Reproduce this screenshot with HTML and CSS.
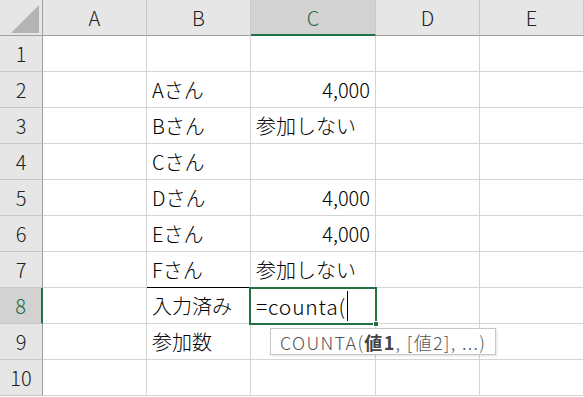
FILE: index.html
```html
<!DOCTYPE html>
<html lang="ja">
  <head>
    <meta charset="UTF-8" />
    <meta name="viewport" content="width=device-width, initial-scale=1.0" />
    <title>COUNTA</title>
    <link rel="stylesheet" href="styles.css">
  </head>
  <body>
    <div class="sheet">
      <div class="corner">
        <svg width="42" height="35" viewBox="0 0 42 35"><polygon points="11,33 39,33 39,5" fill="#b4b4b4" /></svg>
      </div>
      <div class="col-hd">A</div>
      <div class="col-hd">B</div>
      <div class="col-hd sel">C</div>
      <div class="col-hd">D</div>
      <div class="col-hd">E</div>

      <div class="row-hd">1</div>
      <div class="cell"></div><div class="cell"></div><div class="cell"></div><div class="cell"></div><div class="cell"></div>

      <div class="row-hd">2</div>
      <div class="cell"></div><div class="cell">Aさん</div><div class="cell num">4,000</div><div class="cell"></div><div class="cell"></div>

      <div class="row-hd">3</div>
      <div class="cell"></div><div class="cell">Bさん</div><div class="cell">参加しない</div><div class="cell"></div><div class="cell"></div>

      <div class="row-hd">4</div>
      <div class="cell"></div><div class="cell">Cさん</div><div class="cell"></div><div class="cell"></div><div class="cell"></div>

      <div class="row-hd">5</div>
      <div class="cell"></div><div class="cell">Dさん</div><div class="cell num">4,000</div><div class="cell"></div><div class="cell"></div>

      <div class="row-hd">6</div>
      <div class="cell"></div><div class="cell">Eさん</div><div class="cell num">4,000</div><div class="cell"></div><div class="cell"></div>

      <div class="row-hd">7</div>
      <div class="cell"></div><div class="cell ruled">Fさん</div><div class="cell">参加しない</div><div class="cell"></div><div class="cell"></div>

      <div class="row-hd sel">8</div>
      <div class="cell"></div><div class="cell">入力済み</div>
      <div class="cell editing">
        <span class="formula">=counta(</span><span class="caret"></span>
        <div class="active"><span class="handle"></span></div>
      </div>
      <div class="cell"></div><div class="cell"></div>

      <div class="row-hd">9</div>
      <div class="cell"></div><div class="cell">参加数</div><div class="cell"></div><div class="cell"></div><div class="cell"></div>

      <div class="row-hd">10</div>
      <div class="cell"></div><div class="cell"></div><div class="cell"></div><div class="cell"></div><div class="cell"></div>

      <div class="tip">COUNTA(<b>値1</b>, [値2], ...)</div>
    </div>
  </body>
</html>
```

FILE: styles.css
```css
* {
  margin: 0;
  padding: 0;
  box-sizing: border-box;
}
body {
  background-color: #fff;
  color: #000;
  font-family: "Noto Sans CJK JP", "Noto Sans", sans-serif;
  font-weight: 300;
  width: 584px;
  height: 397px;
  overflow: hidden;
}
.sheet {
  position: relative;
  display: grid;
  grid-template-columns: 43px 104px 104px 125px 104px 104px;
  grid-auto-rows: 36px;
}
.corner {
  background-color: #e6e6e6;
  border-right: 1px solid #9e9e9e;
  border-bottom: 1px solid #9e9e9e;
}
.corner svg {
  display: block;
}
.col-hd {
  display: flex;
  align-items: center;
  justify-content: center;
  background-color: #e6e6e6;
  border-right: 1px solid #c8c8c8;
  border-bottom: 1px solid #9e9e9e;
  font-size: 20px;
  color: #222;
}
.col-hd.sel {
  background-color: #d2d2d2;
  border-bottom: 2px solid #217346;
  color: #1d6a40;
}
.row-hd {
  display: flex;
  align-items: center;
  justify-content: center;
  background-color: #e6e6e6;
  border-right: 1px solid #9e9e9e;
  border-bottom: 1px solid #c8c8c8;
  font-size: 20px;
  color: #222;
}
.row-hd.sel {
  background-color: #d2d2d2;
  border-right: 2px solid #217346;
  color: #1d6a40;
}
.cell {
  display: flex;
  align-items: center;
  padding: 0 5px;
  border-right: 1px solid #d4d4d4;
  border-bottom: 1px solid #d4d4d4;
  font-size: 20px;
  white-space: nowrap;
}
.cell.num {
  justify-content: flex-end;
}
.cell.ruled {
  border-bottom-color: #000;
}
.cell.editing {
  position: relative;
}
.formula {
  font-size: 21px;
  letter-spacing: 0.8px;
}
.caret {
  display: inline-block;
  width: 1px;
  height: 30px;
  margin-left: 1px;
  background-color: #000;
}
.active {
  position: absolute;
  left: -2px;
  top: -1px;
  width: 128px;
  height: 38px;
  border: 2px solid #217346;
}
.handle {
  position: absolute;
  right: -4px;
  bottom: -4px;
  width: 6px;
  height: 6px;
  background-color: #217346;
  border: 1px solid #fff;
}
.tip {
  position: absolute;
  left: 270px;
  top: 328px;
  height: 27px;
  padding: 0 9px;
  display: flex;
  align-items: center;
  background-color: #fff;
  border: 1px solid #c6c6c6;
  box-shadow: 1px 1px 2px rgba(0, 0, 0, 0.12);
  font-family: "Noto Sans CJK JP", "Noto Sans", sans-serif;
  font-size: 18px;
  letter-spacing: 1.3px;
  color: #555;
  white-space: nowrap;
}
.tip b {
  font-weight: bold;
  color: #444;
}
```
